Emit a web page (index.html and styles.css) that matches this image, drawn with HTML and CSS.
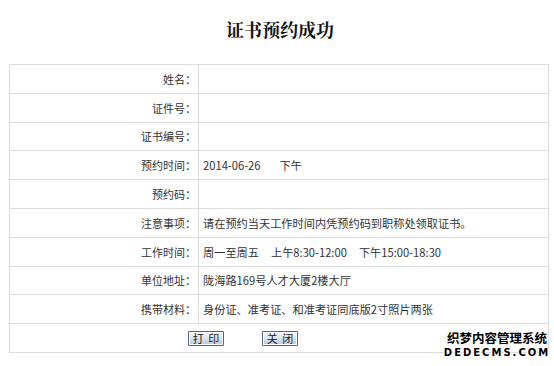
FILE: index.html
```html
<!DOCTYPE html>
<html lang="zh-CN">
<head>
<meta charset="utf-8">
<title>证书预约成功</title>
<link rel="stylesheet" href="styles.css">
</head>
<body>
<div class="page">
  <h1 class="title">证书预约成功</h1>
  <table class="info">
    <tr><td class="label">姓名：</td><td class="value"></td></tr>
    <tr><td class="label">证件号：</td><td class="value"></td></tr>
    <tr><td class="label">证书编号：</td><td class="value"></td></tr>
    <tr><td class="label">预约时间：</td><td class="value">2014-06-26<span class="gap-wide"></span>下午</td></tr>
    <tr><td class="label">预约码：</td><td class="value"></td></tr>
    <tr><td class="label">注意事项：</td><td class="value">请在预约当天工作时间内凭预约码到职称处领取证书。</td></tr>
    <tr><td class="label">工作时间：</td><td class="value">周一至周五<span class="gap"></span>上午8:30-12:00<span class="gap"></span>下午15:00-18:30</td></tr>
    <tr><td class="label">单位地址：</td><td class="value">陇海路169号人才大厦2楼大厅</td></tr>
    <tr><td class="label">携带材料：</td><td class="value">身份证、准考证、和准考证同底版2寸照片两张</td></tr>
    <tr><td class="actions" colspan="2"><div class="btns"><button class="btn">打 印</button><button class="btn">关 闭</button></div></td></tr>
  </table>
  <div class="watermark"><div class="wm-cn">织梦内容管理系统</div><div class="wm-en">DEDECMS.COM</div></div>
</div>
</body>
</html>
```

FILE: styles.css
```css
html, body {
  margin: 0;
  padding: 0;
  background: #ffffff;
}
.page {
  position: relative;
  width: 554px;
  height: 366px;
  overflow: hidden;
  font-family: "Noto Sans CJK SC", sans-serif;
  color: #333333;
}
.title {
  margin: 0;
  padding: 17px 0 0 6px;
  height: 47px;
  line-height: 24px;
  font-size: 18px;
  font-weight: bold;
  text-align: center;
  color: #111111;
  font-family: "Noto Serif CJK SC", "Noto Sans CJK SC", serif;
}
.info {
  margin-left: 9px;
  width: 540px;
  border-collapse: collapse;
  border: 1px solid #d6d6d6;
  font-size: 11px;
}
.info td {
  border: 1px solid #dcdcdc;
  height: 27.8px;
  padding: 0;
  line-height: 16px;
}
.label {
  width: 186px;
  text-align: right;
  padding-right: 2px !important;
  color: #333333;
}
.value {
  padding-left: 4px !important;
  color: #333333;
  font-size: 11.2px;
}
.gap {
  display: inline-block;
  width: 12px;
}
.gap-wide {
  display: inline-block;
  width: 19px;
}
.btns {
  display: flex;
  gap: 38px;
  padding-left: 178px;
  align-items: center;
}
.btn {
  width: 36px;
  height: 15px;
  padding: 0;
  margin: 0;
  border: 1px solid #55637a;
  border-radius: 1px;
  background: linear-gradient(#f6f9fd, #d5e0ee 55%, #b8c7dc);
  font-family: "Noto Sans CJK SC", sans-serif;
  font-size: 11px;
  line-height: 13px;
  word-spacing: 2px;
  color: #222222;
  box-shadow: inset 0 0 0 1px #ffffff;
}
.watermark {
  position: absolute;
  left: 444px;
  top: 329px;
  width: 106px;
  display: flex;
  flex-direction: column;
  align-items: center;
  font-weight: bold;
  color: #000000;
}
.wm-cn {
  font-size: 12.5px;
  line-height: 18px;
  text-shadow: 1px 0 0 #fff, -1px 0 0 #fff, 0 1px 0 #fff, 0 -1px 0 #fff;
}
.wm-en {
  font-family: "DejaVu Sans", sans-serif;
  font-size: 10px;
  line-height: 12px;
  letter-spacing: 2px;
  text-shadow: 1px 0 0 #fff, -1px 0 0 #fff, 0 1px 0 #fff, 0 -1px 0 #fff;
}
```
